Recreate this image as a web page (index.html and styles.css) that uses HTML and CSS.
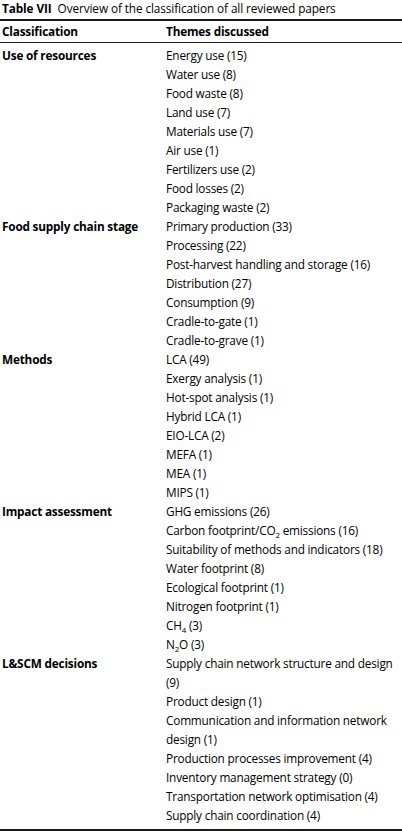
FILE: index.html
```html
<!DOCTYPE html>
<html lang="en">
<head>
    <meta charset="UTF-8">
    <meta name="viewport" content="width=device-width, initial-scale=1.0">
    <title>Table VII</title>
    <link rel="stylesheet" href="styles.css">
</head>
<body>
    <div class="caption"><b>Table VII</b>&nbsp; Overview of the classification of all reviewed papers</div>
    <table class="review-table">
        <thead>
            <tr>
                <th>Classification</th>
                <th>Themes discussed</th>
            </tr>
        </thead>
        <tbody>
            <tr>
                <td class="group">Use of resources</td>
                <td>
                    <div>Energy use (15)</div>
                    <div>Water use (8)</div>
                    <div>Food waste (8)</div>
                    <div>Land use (7)</div>
                    <div>Materials use (7)</div>
                    <div>Air use (1)</div>
                    <div>Fertilizers use (2)</div>
                    <div>Food losses (2)</div>
                    <div>Packaging waste (2)</div>
                </td>
            </tr>
            <tr>
                <td class="group">Food supply chain stage</td>
                <td>
                    <div>Primary production (33)</div>
                    <div>Processing (22)</div>
                    <div>Post-harvest handling and storage (16)</div>
                    <div>Distribution (27)</div>
                    <div>Consumption (9)</div>
                    <div>Cradle-to-gate (1)</div>
                    <div>Cradle-to-grave (1)</div>
                </td>
            </tr>
            <tr>
                <td class="group">Methods</td>
                <td>
                    <div>LCA (49)</div>
                    <div>Exergy analysis (1)</div>
                    <div>Hot-spot analysis (1)</div>
                    <div>Hybrid LCA (1)</div>
                    <div>EIO-LCA (2)</div>
                    <div>MEFA (1)</div>
                    <div>MEA (1)</div>
                    <div>MIPS (1)</div>
                </td>
            </tr>
            <tr>
                <td class="group">Impact assessment</td>
                <td>
                    <div>GHG emissions (26)</div>
                    <div>Carbon footprint/CO<sub>2</sub> emissions (16)</div>
                    <div>Suitability of methods and indicators (18)</div>
                    <div>Water footprint (8)</div>
                    <div>Ecological footprint (1)</div>
                    <div>Nitrogen footprint (1)</div>
                    <div>CH<sub>4</sub> (3)</div>
                    <div>N<sub>2</sub>O (3)</div>
                </td>
            </tr>
            <tr>
                <td class="group">L&amp;SCM decisions</td>
                <td>
                    <div>Supply chain network structure and design (9)</div>
                    <div>Product design (1)</div>
                    <div>Communication and information network design (1)</div>
                    <div>Production processes improvement (4)</div>
                    <div>Inventory management strategy (0)</div>
                    <div>Transportation network optimisation (4)</div>
                    <div>Supply chain coordination (4)</div>
                </td>
            </tr>
        </tbody>
    </table>
</body>
</html>
```

FILE: styles.css
```css
body {
    font-family: "Open Sans", "Noto Sans", sans-serif;
    background-color: #ffffff;
    color: #000000;
    margin: 0;
    padding: 0;
}
.caption {
    font-size: 11.8px;
    line-height: 17px;
    letter-spacing: -0.1px;
    padding: 0 0 0 2px;
}
.caption b {
    font-weight: 700;
}
.review-table {
    width: 100%;
    border-collapse: collapse;
    margin-top: 2px;
    font-size: 11.8px;
    line-height: 19px;
    letter-spacing: -0.2px;
    border-top: 2px solid #1a1a1a;
    border-bottom: 2px solid #1a1a1a;
}
.review-table th {
    text-align: left;
    font-weight: 700;
    padding: 1px 0 1px 2px;
    border-bottom: 1px solid #1a1a1a;
}
.review-table td {
    vertical-align: top;
    padding: 0 4px 0 2px;
}
.review-table th:first-child,
.review-table td.group {
    width: 162px;
}
.review-table td.group {
    font-weight: 700;
    padding-right: 0;
}
.review-table tbody tr:first-child td {
    padding-top: 3px;
}
.review-table tbody tr:last-child td {
    padding-bottom: 4px;
}
.review-table sub {
    font-size: 8px;
    line-height: 0;
}
```
